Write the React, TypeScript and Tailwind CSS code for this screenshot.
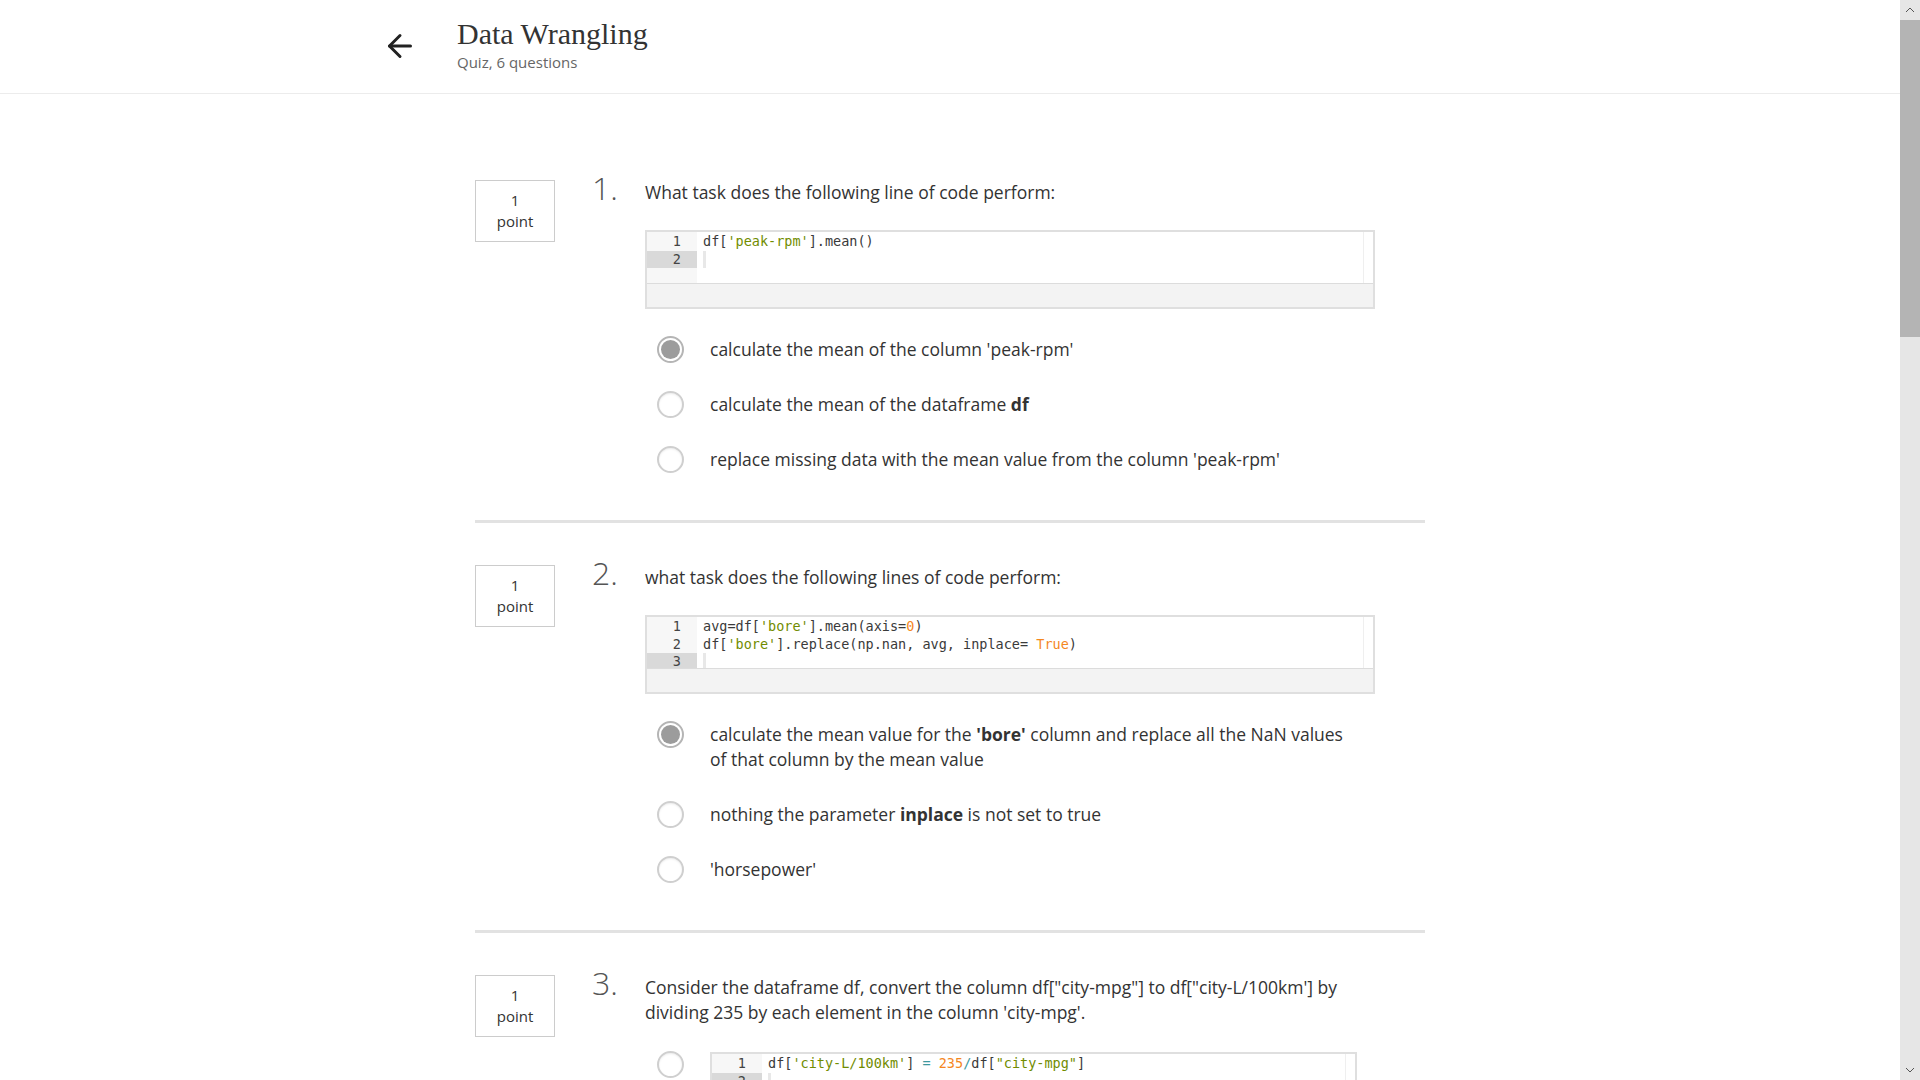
import React from "react";
import { ArrowLeft } from "lucide-react";

type Seg = [string, string?];
type Line = Seg[];

const C = {
  str: "text-[#718c00]",
  num: "text-[#f5871f]",
  op: "text-[#3e999f]",
};

function CodeBox({ lines, width }: { lines: Line[]; width: string }) {
  const active = lines.length - 1;
  return (
    <div className={`${width} border-2 border-[#dfdfdf] bg-white`}>
      <div className="flex h-[51px] overflow-hidden font-['DejaVu_Sans_Mono',monospace] text-[13.5px] leading-[17.5px] text-[#3a3a3a]">
        <div className="w-[50px] shrink-0 bg-[#f7f7f7] pt-[1px]">
          {lines.map((_, i) => (
            <div
              key={i}
              className={`h-[17.5px] pr-[16px] text-right text-[#444] ${i === active ? "bg-[#d9d9d9]" : ""}`}
            >
              {i + 1}
            </div>
          ))}
        </div>
        <div className="flex-1 pl-[6px] pt-[1px]">
          {lines.map((ln, i) => (
            <div key={i} className="h-[17.5px] whitespace-pre">
              {i === active && ln.length === 0 ? (
                <span className="inline-block h-[17.5px] w-[3px] bg-[#e8e8e8] align-top" />
              ) : (
                ln.map((s, j) => (
                  <span key={j} className={s[1] ?? ""}>
                    {s[0]}
                  </span>
                ))
              )}
            </div>
          ))}
        </div>
        <div className="w-[10px] shrink-0 border-l border-[#efefef]" />
      </div>
      <div className="h-[24px] border-t border-[#dcdcdc] bg-[#f3f3f3]" />
    </div>
  );
}

function Radio({ checked }: { checked?: boolean }) {
  return checked ? (
    <div className="flex h-[27px] w-[27px] shrink-0 items-center justify-center rounded-full border-2 border-[#b5b5b5] bg-white">
      <div className="h-[19px] w-[19px] rounded-full bg-[#9c9c9c]" />
    </div>
  ) : (
    <div className="h-[27px] w-[27px] shrink-0 rounded-full border-2 border-[#cfcfcf] bg-white shadow-[inset_0_1px_2px_rgba(0,0,0,0.08)]" />
  );
}

function RadioSlot({ checked }: { checked?: boolean }) {
  return (
    <div className="ml-[12px] h-[25px] w-[27px] shrink-0">
      <div className="-mt-[1px]">
        <Radio checked={checked} />
      </div>
    </div>
  );
}

function Option({ checked, children }: { checked?: boolean; children: React.ReactNode }) {
  return (
    <div className="flex items-start">
      <RadioSlot checked={checked} />
      <div className="ml-[26px] max-w-[640px] text-[17.5px] leading-[25px] text-[#333]">{children}</div>
    </div>
  );
}

function Question({
  n,
  text,
  children,
}: {
  n: number;
  text: React.ReactNode;
  children: React.ReactNode;
}) {
  return (
    <div className="flex items-start">
      <div className="flex h-[62px] w-[80px] shrink-0 flex-col items-center justify-center border border-[#cccccc] text-[15px] leading-[21px] text-[#333]">
        <div>1</div>
        <div>point</div>
      </div>
      <div className="-mt-[8px] ml-[37px] w-[53px] shrink-0 text-[32px] font-light leading-[32px] text-[#555]">
        {n}.
      </div>
      <div className="w-[730px]">
        <div className="text-[17.5px] leading-[25px] text-[#333]">{text}</div>
        {children}
      </div>
    </div>
  );
}

function Separator() {
  return <div className="mb-[42px] mt-[48px] h-[3px] w-full bg-[#e2e2e2]" />;
}

export default function App() {
  return (
    <div className="flex h-[1080px] w-[1920px] overflow-hidden bg-white font-['Open_Sans',sans-serif]">
      <div className="flex min-w-0 flex-1 flex-col">
        <header className="flex h-[94px] shrink-0 items-start border-b border-[#ececec] pl-[382px]">
          <div className="mt-[28px] text-[#222]">
            <ArrowLeft size={36} strokeWidth={2} />
          </div>
          <div className="ml-[39px] pt-[19px]">
            <div className="font-['Liberation_Serif',serif] text-[30px] leading-[30px] text-[#333]">
              Data Wrangling
            </div>
            <div className="mt-[3px] text-[15px] leading-[20px] text-[#666]">Quiz, 6 questions</div>
          </div>
        </header>

        <main className="mx-auto w-[950px] pt-[86px]">
          <Question n={1} text="What task does the following line of code perform:">
            <div className="mt-[25px]">
              <CodeBox
                width="w-[730px]"
                lines={[
                  [["df["], ["'peak-rpm'", C.str], ["].mean()"]],
                  [],
                ]}
              />
            </div>
            <div className="mt-[28px] flex flex-col gap-[30px]">
              <Option checked>calculate the mean of the column 'peak-rpm'</Option>
              <Option>
                calculate the mean of the dataframe <b className="font-bold">df</b>
              </Option>
              <Option>replace missing data with the mean value from the column 'peak-rpm'</Option>
            </div>
          </Question>

          <Separator />

          <Question n={2} text="what task does the following lines of code perform:">
            <div className="mt-[25px]">
              <CodeBox
                width="w-[730px]"
                lines={[
                  [["avg=df["], ["'bore'", C.str], ["].mean(axis="], ["0", C.num], [")"]],
                  [["df["], ["'bore'", C.str], ["].replace(np.nan, avg, inplace= "], ["True", C.num], [")"]],
                  [],
                ]}
              />
            </div>
            <div className="mt-[28px] flex flex-col gap-[30px]">
              <Option checked>
                calculate the mean value for the <b className="font-bold">'bore'</b> column and replace all the NaN
                values of that column by the mean value
              </Option>
              <Option>
                nothing the parameter <b className="font-bold">inplace</b> is not set to true
              </Option>
              <Option>'horsepower'</Option>
            </div>
          </Question>

          <Separator />

          <Question
            n={3}
            text={
              <>
                Consider the dataframe df, convert the column df["city-mpg"] to df["city-L/100km'] by dividing 235 by
                each element in the column 'city-mpg'.
              </>
            }
          >
            <div className="mt-[27px] flex items-start">
              <RadioSlot />
              <div className="ml-[26px]">
                <CodeBox
                  width="w-[647px]"
                  lines={[
                    [
                      ["df["],
                      ["'city-L/100km'", C.str],
                      ["] "],
                      ["=", C.op],
                      [" "],
                      ["235", C.num],
                      ["/", C.op],
                      ["df["],
                      ['"city-mpg"', C.str],
                      ["]"],
                    ],
                    [],
                  ]}
                />
              </div>
            </div>
          </Question>
        </main>
      </div>

      <div className="flex h-full w-[20px] shrink-0 flex-col bg-[#e6e6e6]">
        <div className="flex h-[20px] items-center justify-center">
          <svg width="10" height="6" viewBox="0 0 10 6">
            <path d="M1 5 L5 1 L9 5" fill="none" stroke="#555" strokeWidth="1" />
          </svg>
        </div>
        <div className="h-[317px] bg-[#b4b4b4]" />
        <div className="flex-1" />
        <div className="flex h-[20px] items-center justify-center">
          <svg width="10" height="6" viewBox="0 0 10 6">
            <path d="M1 1 L5 5 L9 1" fill="none" stroke="#555" strokeWidth="1" />
          </svg>
        </div>
      </div>
    </div>
  );
}
